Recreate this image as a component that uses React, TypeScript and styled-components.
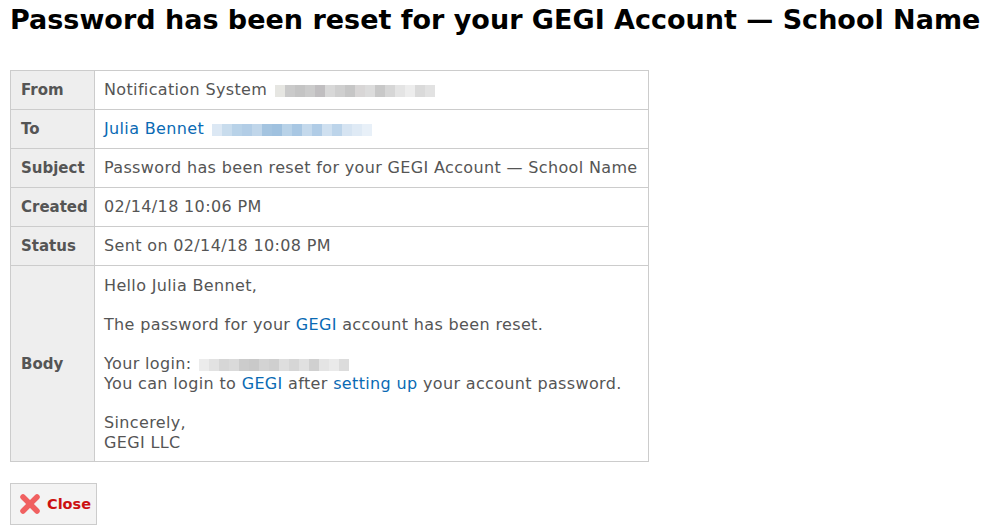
import React from "react";
import styled, { createGlobalStyle } from "styled-components";

const GlobalStyle = createGlobalStyle`
    body {
        margin: 0;
        background: #fff;
        font-family: "DejaVu Sans", Verdana, sans-serif;
    }
`;

const Page = styled.div`
    padding: 0 10px;
`;

const Heading = styled.h1`
    font-size: 27px;
    font-weight: 700;
    color: #000;
    margin: 4px 0 35px;
    white-space: nowrap;
`;

const Table = styled.table`
    border-collapse: collapse;
    width: 639px;
    font-size: 16px;
    letter-spacing: 0.35px;
    color: #555;
`;

const Label = styled.th`
    width: 73px;
    background: #eee;
    border: 1px solid #ccc;
    padding: 9px 0 9px 10px;
    text-align: left;
    font-weight: 700;
    font-size: 15px;
    letter-spacing: 0;
    vertical-align: middle;
    height: 20px;
    white-space: nowrap;
`;

const Value = styled.td<{ $body?: boolean }>`
    border: 1px solid #ccc;
    padding: ${(p) => (p.$body ? "10px 9px 9px" : "9px")};
    line-height: 19.6px;
    white-space: nowrap;
`;

const Link = styled.a`
    color: #0a6ab4;
    text-decoration: none;
`;

const Blank = styled.div`
    height: 19.6px;
`;

const Blur = styled.span`
    display: inline-flex;
    vertical-align: middle;
    height: 12px;
    margin-left: 2px;
`;

const Block = styled.span<{ $c: string }>`
    width: 10px;
    height: 100%;
    background: ${(p) => p.$c};
`;

const Footer = styled.div`
    margin-top: 21px;
`;

const CloseButton = styled.button`
    display: inline-flex;
    align-items: center;
    gap: 6px;
    height: 42px;
    padding: 0 5px 0 8px;
    background: #f3f3f3;
    border: 1px solid #ccc;
    color: #cc1111;
    font-family: "DejaVu Sans", Verdana, sans-serif;
    font-weight: 700;
    font-size: 14.5px;
    cursor: pointer;
`;

const grayBlur = ["#e6e6e2", "#cacaca", "#c4c4c4", "#cbcbcb", "#c0bec0", "#d8d8d8", "#cfcfcf", "#c6c6c6", "#d8d6d6", "#dcdcdc", "#c8c8c8", "#d6d6d6", "#e4e4e4", "#ededed", "#dadada", "#e2e2e2"];
const blueBlur = ["#dce8f4", "#c8dced", "#b8d2e8", "#b2cde6", "#c0d6ea", "#a4c4e0", "#9fc1df", "#b8d2e8", "#a8c7e3", "#c4d9ec", "#b0cce6", "#cfe0f0", "#bcd4ea", "#d6e4f2", "#dfeaf5", "#e8f0f8"];
const loginBlur = ["#ececec", "#e2e2e2", "#d6d6d6", "#dadada", "#cccccc", "#c9c9c9", "#d3d3d3", "#cfcfcf", "#dedede", "#d6d6d6", "#e0e0e0", "#d0d0d0", "#e4e4e4", "#eaeaea", "#dcdcdc"];

const Blurred = ({ colors }: { colors: string[] }) => (
    <Blur>
        {colors.map((c, i) => (
            <Block key={i} $c={c} />
        ))}
    </Blur>
);

const CrossIcon = () => (
    <svg width="22" height="22" viewBox="0 0 22 22">
        <path
            d="M4 4 L18 18 M18 4 L4 18"
            stroke="#f06060"
            strokeWidth="5.5"
            strokeLinecap="round"
        />
    </svg>
);

const rows = [
    { label: "From", value: <>Notification System <Blurred colors={grayBlur} /></> },
    { label: "To", value: <><Link href="#">Julia Bennet</Link> <Blurred colors={blueBlur} /></> },
    { label: "Subject", value: "Password has been reset for your GEGI Account — School Name" },
    { label: "Created", value: "02/14/18 10:06 PM" },
    { label: "Status", value: "Sent on 02/14/18 10:08 PM" },
];

const App: React.FC = () => {
    return (
        <Page>
            <GlobalStyle />
            <Heading>Password has been reset for your GEGI Account — School Name</Heading>
            <Table>
                <tbody>
                    {rows.map((r) => (
                        <tr key={r.label}>
                            <Label>{r.label}</Label>
                            <Value>{r.value}</Value>
                        </tr>
                    ))}
                    <tr>
                        <Label>Body</Label>
                        <Value $body>
                            <div>Hello Julia Bennet,</div>
                            <Blank />
                            <div>The password for your <Link href="#">GEGI</Link> account has been reset.</div>
                            <Blank />
                            <div>Your login: <Blurred colors={loginBlur} /></div>
                            <div>
                                You can login to <Link href="#">GEGI</Link> after <Link href="#">setting up</Link> your account password.
                            </div>
                            <Blank />
                            <div>Sincerely,</div>
                            <div>GEGI LLC</div>
                        </Value>
                    </tr>
                </tbody>
            </Table>
            <Footer>
                <CloseButton>
                    <CrossIcon />
                    Close
                </CloseButton>
            </Footer>
        </Page>
    );
};

export default App;
